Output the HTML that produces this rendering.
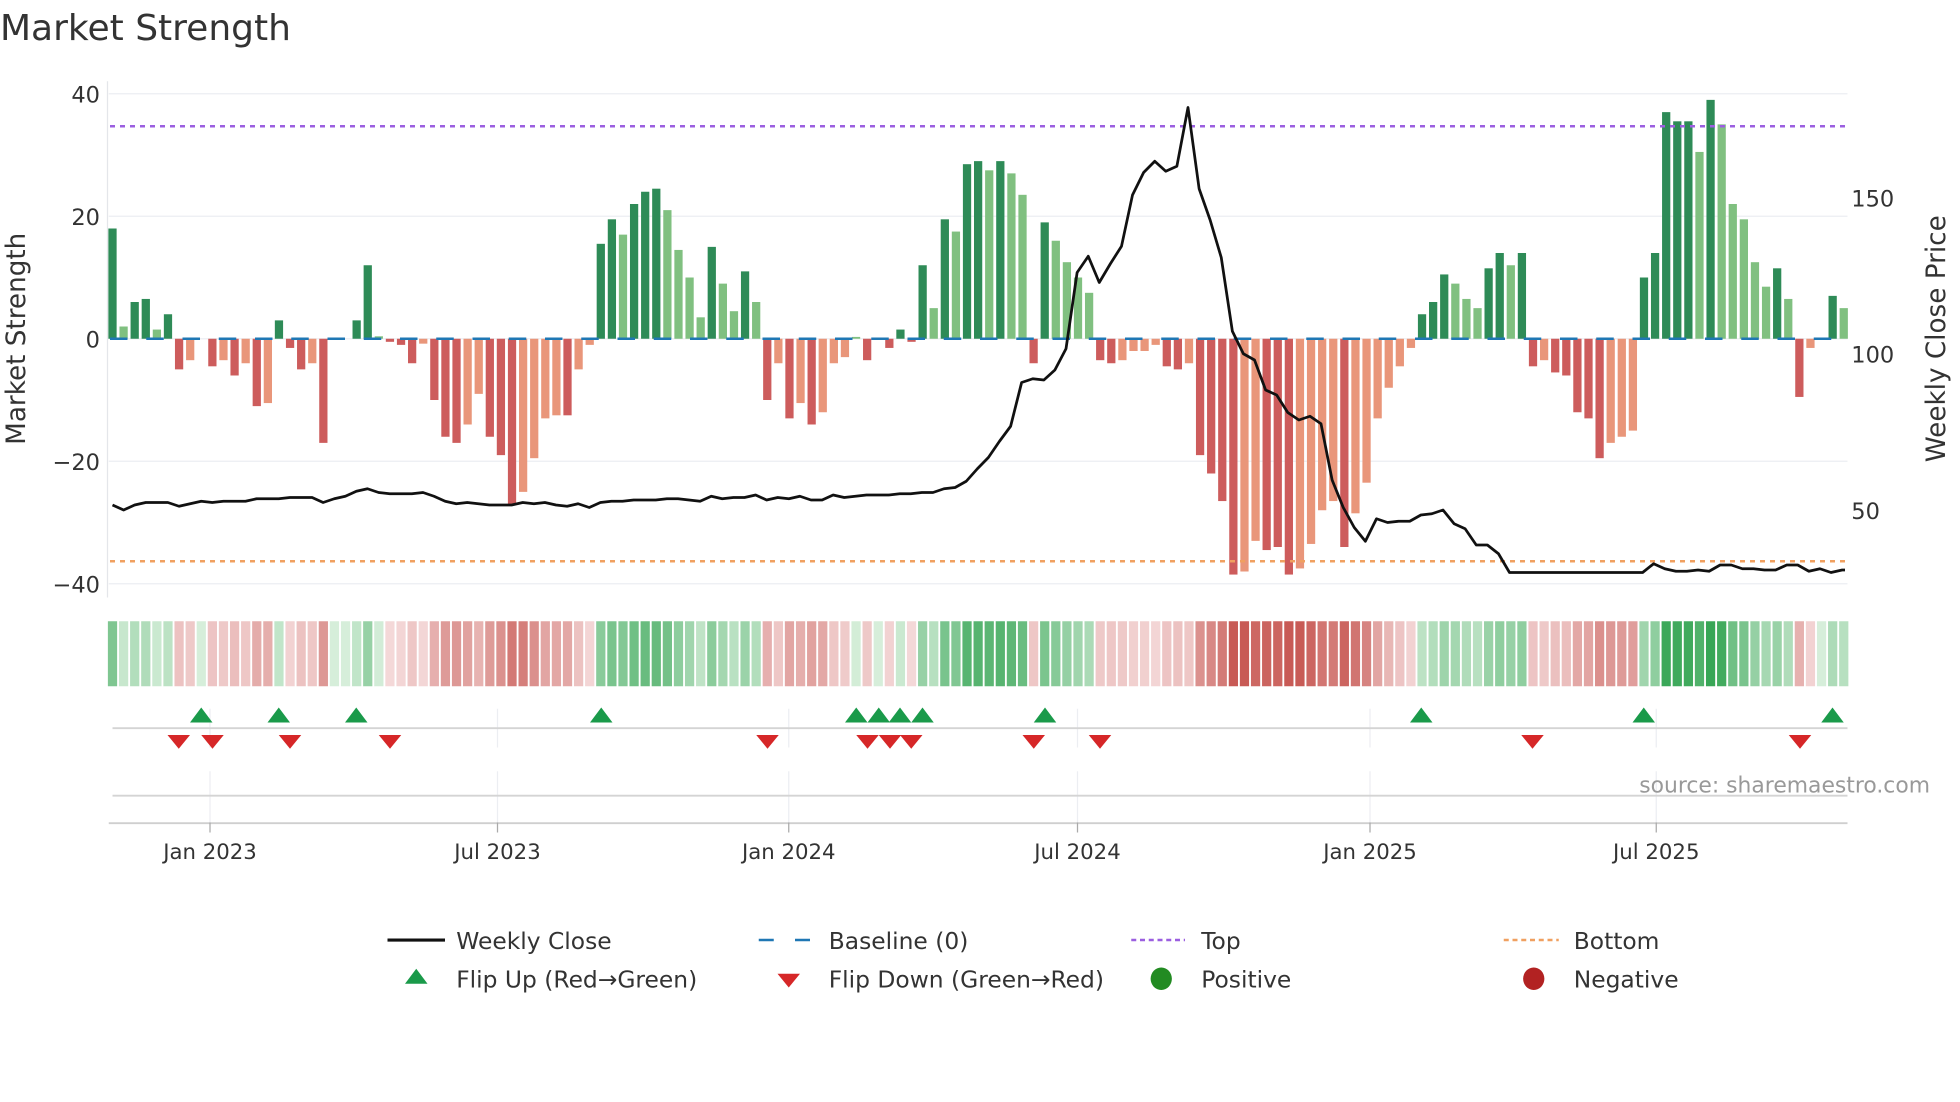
<!DOCTYPE html>
<html><head><meta charset="utf-8"><style>
html,body{margin:0;padding:0;background:#fff;width:1960px;height:1102px;overflow:hidden}
svg{display:block;font-family:"DejaVu Sans","Liberation Sans",sans-serif}
</style></head><body>
<svg id="s" width="1960" height="1102" viewBox="0 0 1568 881.6" xmlns="http://www.w3.org/2000/svg">
<rect width="1568" height="882" fill="#fff"/>
<text x="0" y="32" font-size="28.8" fill="#333">Market Strength</text>
<g stroke="#eceef2" stroke-width="1">
<line x1="87" x2="1478" y1="75" y2="75"/><line x1="87" x2="1478" y1="173" y2="173"/>
<line x1="87" x2="1478" y1="369" y2="369"/><line x1="87" x2="1478" y1="467" y2="467"/>
<line x1="87" x2="1478" y1="271" y2="271"/>
</g>
<line x1="86" x2="86" y1="65" y2="478" stroke="#e4e6ea"/>
<g font-size="18" fill="#333" text-anchor="end">
<text x="80" y="82">40</text><text x="80" y="180">20</text><text x="80" y="278">0</text><text x="80" y="376">−20</text><text x="80" y="474">−40</text>
</g>
<g font-size="18" fill="#333">
<text x="1481" y="165">150</text><text x="1481" y="290">100</text><text x="1481" y="415">50</text>
</g>
<text transform="translate(20,271) rotate(-90)" font-size="21" fill="#333" text-anchor="middle">Market Strength</text>
<text transform="translate(1556,271) rotate(-90)" font-size="21" fill="#333" text-anchor="middle">Weekly Close Price</text>
<g id="bars"></g>
<line x1="88" x2="1478" y1="271" y2="271" stroke="#1f77b4" stroke-width="2" stroke-dasharray="14,15"/>
<line x1="88" x2="1478" y1="101" y2="101" stroke="#9b5fe0" stroke-width="2" stroke-dasharray="4,4"/>
<line x1="88" x2="1478" y1="449" y2="449" stroke="#f0a060" stroke-width="2" stroke-dasharray="4,4"/>
<polyline id="price" fill="none" stroke="#111" stroke-width="2.2" stroke-linejoin="round"/>
<g id="strip"></g>
<g stroke="#eceef2">
<line x1="168" x2="168" y1="567" y2="598"/><line x1="398" x2="398" y1="567" y2="598"/><line x1="631" x2="631" y1="567" y2="598"/><line x1="862" x2="862" y1="567" y2="598"/><line x1="1096" x2="1096" y1="567" y2="598"/><line x1="1325" x2="1325" y1="567" y2="598"/>
<line x1="168" x2="168" y1="617" y2="658"/><line x1="398" x2="398" y1="617" y2="658"/><line x1="631" x2="631" y1="617" y2="658"/><line x1="862" x2="862" y1="617" y2="658"/><line x1="1096" x2="1096" y1="617" y2="658"/><line x1="1325" x2="1325" y1="617" y2="658"/>
</g>
<line x1="90" x2="1478" y1="582.5" y2="582.5" stroke="#d4d4d4" stroke-width="1.5"/>
<line x1="90" x2="1478" y1="636.5" y2="636.5" stroke="#d4d4d4" stroke-width="1.5"/>
<line x1="87" x2="1478" y1="658.5" y2="658.5" stroke="#cfcfcf" stroke-width="1.5"/>
<g stroke="#aaa"><line x1="168" x2="168" y1="658" y2="666"/><line x1="398" x2="398" y1="658" y2="666"/><line x1="631" x2="631" y1="658" y2="666"/><line x1="862" x2="862" y1="658" y2="666"/><line x1="1096" x2="1096" y1="658" y2="666"/><line x1="1325" x2="1325" y1="658" y2="666"/></g>
<g id="mk"></g>
<text x="1544" y="634" font-size="17.5" fill="#999" text-anchor="end">source: sharemaestro.com</text>
<g font-size="17" fill="#333" text-anchor="middle">
<text x="168" y="687">Jan 2023</text><text x="398" y="687">Jul 2023</text><text x="631" y="687">Jan 2024</text><text x="862" y="687">Jul 2024</text><text x="1096" y="687">Jan 2025</text><text x="1325" y="687">Jul 2025</text>
</g>
<g font-size="18.7" fill="#333">
<line x1="310" x2="356" y1="752" y2="752" stroke="#111" stroke-width="2.5"/>
<text x="365" y="759">Weekly Close</text>
<line x1="607" x2="652" y1="752" y2="752" stroke="#1f77b4" stroke-width="2" stroke-dasharray="12,17"/>
<text x="663" y="759">Baseline (0)</text>
<line x1="905" x2="948" y1="752" y2="752" stroke="#9b5fe0" stroke-width="2" stroke-dasharray="4,3"/>
<text x="961" y="759">Top</text>
<line x1="1203" x2="1247" y1="752" y2="752" stroke="#f0a060" stroke-width="2" stroke-dasharray="4,3"/>
<text x="1259" y="759">Bottom</text>
<polygon points="324,787 342,787 333,775" fill="#1a9a4a"/>
<text x="365" y="790">Flip Up (Red→Green)</text>
<polygon points="622,779 640,779 631,790" fill="#d62728"/>
<text x="663" y="790">Flip Down (Green→Red)</text>
<ellipse cx="929" cy="783" rx="8.5" ry="9" fill="#228b22"/>
<text x="961" y="790">Positive</text>
<ellipse cx="1227" cy="783" rx="8.5" ry="9" fill="#b22222"/>
<text x="1259" y="790">Negative</text>
</g>
</svg>
<script>
var NS="http://www.w3.org/2000/svg";
function el(t,a,p){var e=document.createElementNS(NS,t);for(var k in a)e.setAttribute(k,a[k]);p.appendChild(e);return e;}
var B="18d 2l 6d 6.5d 1.5l 4d -5r -3.5o 0z -4.5r -3.5o -6r -4o -11r -10.5o 3d -1.5r -5r -4o -17r 0z 0z 3d 12d 0.4l -0.5r -1r -4r -0.8o -10r -16r -17r -14o -9o -16r -19r -27r -25o -19.5o -13o -12.5o -12.5r -5o -1o 15.5d 19.5d 17l 22d 24d 24.5d 21l 14.5l 10l 3.5l 15d 9l 4.5l 11d 6l -10r -4o -13r -10.5o -14r -12o -4o -3o 0.3l -3.5r 0z -1.5r 1.5d -0.5r 12d 5l 19.5d 17.5l 28.5d 29d 27.5l 29d 27l 23.5l -4r 19d 16l 12.5l 10l 7.5l -3.5r -4r -3.5o -2o -2o -1o -4.5r -5r -4o -19r -22r -26.5r -38.5r -38o -33o -34.5r -34r -38.5r -37.5o -33.5o -28o -26.5o -34r -28.5o -23.5o -13o -8o -4.5o -1.5o 4d 6d 10.5d 9l 6.5l 5l 11.5d 14d 12l 14d -4.5r -3.5o -5.5r -6r -12r -13r -19.5r -17o -16o -15o 10d 14d 37d 35.5d 35.5d 30.5l 39d 35l 22l 19.5l 12.5l 8.5l 11.5d 6.5l -9.5r -1.5o 0z 7d 5l".split(" ");
var n=B.length,x0=90,x1=1475,st=(x1-x0)/(n-1);
var col={d:"#2e8b57",l:"#80c080",r:"#cd5c5c",o:"#e9967a",z:"#fff"};
var gb=document.getElementById("bars"),gs=document.getElementById("strip");
function mix(a,b,t){var r=[];for(var i=0;i<3;i++)r.push(Math.round(a[i]+(b[i]-a[i])*t));return"rgb("+r.join(",")+")";}
for(var i=0;i<n;i++){
 var v=parseFloat(B[i]),c=B[i].slice(-1),x=x0+i*st;
 if(c!="z"&&Math.abs(v)>0.1){var y=271-v*4.9;el("rect",{x:x-3.3,y:Math.min(y,271),width:6.6,height:Math.abs(v*4.9),fill:col[c]},gb);}
 var t=Math.min(1,Math.abs(v)/38);
 var f=v>=0?mix([214,238,218],[56,166,86],Math.pow(t,0.8)):mix([245,220,220],[200,90,85],Math.pow(t,0.8));
 el("rect",{x:x-st/2+0.75,y:497,width:st-1.5,height:52,fill:f},gs);
}
var P=[404,408,404,402,402,402,405,403,401,402,401,401,401,399,399,399,398,398,398,402,399,397,393,391,394,395,395,395,394,397,401,403,402,403,404,404,404,402,403,402,404,405,403,406,402,401,401,400,400,400,399,399,400,401,397,399,398,398,396,400,398,399,397,400,400,396,398,397,396,396,396,395,395,394,394,391,390,385,375,366,353,341,306,303,304,296,279,218,205,226,211,197,156,138,129,137,133,86,151,176,206,265,283,288,312,316,330,336,333,339,384,406,422,433,415,418,417,417,412,411,408,419,423,436,436,443,458,458,458,458,458,458,458,458,458,458,458,458,458,451,455,457,457,456,457,452,452,455,455,456,456,452,452,457,455,458,456,456];
var pts=[],m=P.length,ps=8.87;
for(var j=0;j<m;j++)pts.push(Math.min(1476,x0+j*ps).toFixed(1)+","+P[j]);
document.getElementById("price").setAttribute("points",pts.join(" "));
var mk=document.getElementById("mk");
[161,223,285,481,685,703,720,738,836,1137,1315,1466].forEach(function(x){el("polygon",{points:(x-9)+",578 "+(x+9)+",578 "+x+",566",fill:"#1a9a4a"},mk);});
[143,170,232,312,614,694,712,729,827,880,1226,1440].forEach(function(x){el("polygon",{points:(x-9)+",588 "+(x+9)+",588 "+x+",599",fill:"#d62728"},mk);});
</script>
</body></html>
